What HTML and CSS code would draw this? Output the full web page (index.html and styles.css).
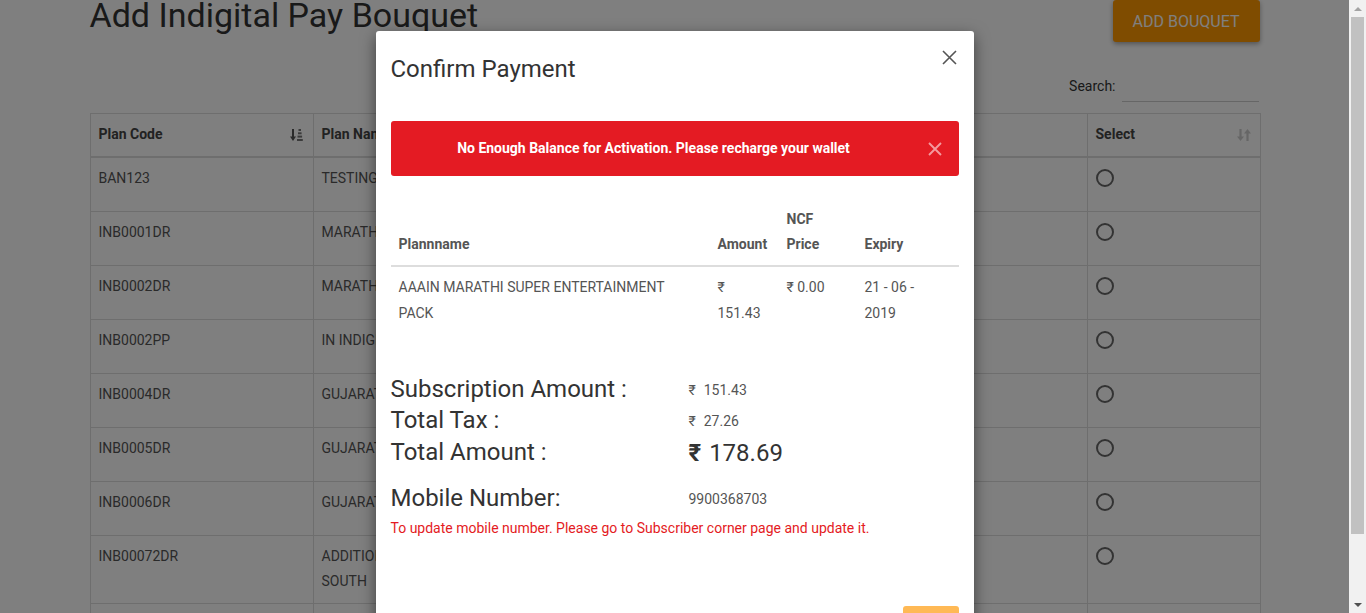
FILE: index.html
```html
<!DOCTYPE html>
<html lang="en">
<head>
<meta charset="utf-8">
<title>Add Indigital Pay Bouquet</title>
<link rel="stylesheet" href="styles.css">
</head>
<body>
<div class="viewport">
  <div class="main">
    <div class="container">
      <div class="page-head">
        <h2 class="page-title">Add Indigital Pay Bouquet</h2>
        <button class="btn-add" type="button">ADD BOUQUET</button>
      </div>
      <div class="search-row">
        <label class="search-label">Search:</label>
        <input class="search-input" type="text">
      </div>
      <table class="plans">
        <colgroup>
          <col class="c-code"><col class="c-name"><col class="c-price"><col class="c-exp"><col class="c-sel">
        </colgroup>
        <thead>
          <tr>
            <th><div class="th-in"><span>Plan Code</span>
              <svg class="sort-ic" width="14" height="14" viewBox="0 0 14 14"><path d="M3 1v8" stroke="#555" stroke-width="2"/><path d="M0 8.5h6L3 13z" fill="#555"/><rect x="8.5" y="1" width="2.5" height="2" fill="#777"/><rect x="8" y="4.3" width="3.6" height="2" fill="#777"/><rect x="7.5" y="7.6" width="4.6" height="2" fill="#777"/><rect x="7" y="11" width="5.8" height="2" fill="#777"/></svg>
            </div></th>
            <th><div class="th-in"><span>Plan Name</span></div></th>
            <th><div class="th-in"><span>Price</span></div></th>
            <th><div class="th-in"><span>Expiry</span></div></th>
            <th><div class="th-in"><span>Select</span>
              <svg class="sort-ic" width="14" height="14" viewBox="0 0 14 14"><path d="M3.5 1v8" stroke="#ccc" stroke-width="2.2"/><path d="M0 8.5h7L3.5 13z" fill="#ccc"/><path d="M10.5 13V5" stroke="#ccc" stroke-width="2.2"/><path d="M7 5.5h7L10.5 1z" fill="#ccc"/></svg>
            </div></th>
          </tr>
        </thead>
        <tbody>
          <tr><td>BAN123</td><td>TESTING</td><td>₹ 10.00</td><td>21-06-2019</td><td><span class="radio"></span></td></tr>
          <tr><td>INB0001DR</td><td>MARATHI BASIC</td><td>₹ 99.00</td><td>21-06-2019</td><td><span class="radio"></span></td></tr>
          <tr><td>INB0002DR</td><td>MARATHI PREMIUM</td><td>₹ 151.43</td><td>21-06-2019</td><td><span class="radio"></span></td></tr>
          <tr><td>INB0002PP</td><td>IN INDIGITAL PACK</td><td>₹ 120.00</td><td>21-06-2019</td><td><span class="radio"></span></td></tr>
          <tr><td>INB0004DR</td><td>GUJARATI BASIC</td><td>₹ 99.00</td><td>21-06-2019</td><td><span class="radio"></span></td></tr>
          <tr><td>INB0005DR</td><td>GUJARATI VALUE</td><td>₹ 130.00</td><td>21-06-2019</td><td><span class="radio"></span></td></tr>
          <tr><td>INB0006DR</td><td>GUJARATI PREMIUM</td><td>₹ 160.00</td><td>21-06-2019</td><td><span class="radio"></span></td></tr>
          <tr><td>INB00072DR</td><td>ADDITIONAL REGIONAL SOUTH</td><td>₹ 45.00</td><td>21-06-2019</td><td><span class="radio"></span></td></tr>
          <tr><td>INB0008DR</td><td>KANNADA BASIC</td><td>₹ 99.00</td><td>21-06-2019</td><td><span class="radio"></span></td></tr>
        </tbody>
      </table>
    </div>

    <div class="backdrop">
      <div class="modal">
        <div class="modal-head">
          <h4 class="modal-title">Confirm Payment</h4>
          <svg class="modal-close" width="15" height="15" viewBox="0 0 15 15"><path d="M1 1L14 14M14 1L1 14" stroke="#555" stroke-width="1.6"/></svg>
        </div>
        <div class="modal-body">
          <div class="alert">
            <span class="alert-text">No Enough Balance for Activation. Please recharge your wallet</span>
            <svg class="alert-close" width="14" height="14" viewBox="0 0 14 14"><path d="M1 1L13 13M13 1L1 13" stroke="#f49a9e" stroke-width="1.9"/></svg>
          </div>
          <table class="pay-table">
            <colgroup><col class="p-name"><col class="p-amt"><col class="p-ncf"><col class="p-exp"></colgroup>
            <thead>
              <tr><th>Plannname</th><th>Amount</th><th>NCF Price</th><th>Expiry</th></tr>
            </thead>
            <tbody>
              <tr><td class="name-cell">AAAIN MARATHI SUPER ENTERTAINMENT PACK</td><td>₹ 151.43</td><td>₹ 0.00</td><td class="exp-cell">21 - 06 - 2019</td></tr>
            </tbody>
          </table>
          <div class="summary">
            <div class="sum-row"><span class="sum-label">Subscription Amount :</span><span class="sum-val"><span class="rs">₹</span>151.43</span></div>
            <div class="sum-row"><span class="sum-label">Total Tax :</span><span class="sum-val"><span class="rs">₹</span>27.26</span></div>
            <div class="sum-row"><span class="sum-label">Total Amount :</span><span class="sum-total"><span class="rs rs-bold">₹</span>178.69</span></div>
            <div class="sum-row mobile-row"><span class="sum-label">Mobile Number:</span><span class="sum-val">9900368703</span></div>
          </div>
          <p class="note">To update mobile number. Please go to Subscriber corner page and update it.</p>
        </div>
        <div class="modal-foot">
          <button class="btn-pay" type="button">PAY</button>
        </div>
      </div>
    </div>
  </div>

  <div class="scrollbar">
    <div class="sb-btn"><span class="tri-up"></span></div>
    <div class="sb-thumb"></div>
    <div class="sb-track"></div>
    <div class="sb-btn"><span class="tri-down"></span></div>
  </div>
</div>
</body>
</html>
```

FILE: styles.css
```css
* { box-sizing: border-box; }

body {
  margin: 0;
  overflow: hidden;
  font-family: Roboto, "Noto Sans", "DejaVu Sans", sans-serif;
  background: #fff;
}

.viewport {
  display: flex;
  width: 1366px;
  height: 613px;
  overflow: hidden;
}

.main {
  position: relative;
  flex: 0 0 1349px;
  height: 613px;
  overflow: hidden;
  background: #fff;
}

.container {
  width: 1170px;
  margin: 0 auto;
}

.page-head {
  display: flex;
  justify-content: space-between;
  align-items: flex-start;
  height: 42px;
}

.page-title {
  margin: -3px 0 0;
  font-size: 34px;
  font-weight: 400;
  line-height: 1.1;
  color: #333;
  white-space: nowrap;
}

.btn-add {
  width: 147px;
  height: 42px;
  padding: 0;
  border: 0;
  border-radius: 3px;
  background: #ff9800;
  color: #fff;
  font-family: Roboto, sans-serif;
  font-size: 16px;
  font-weight: 400;
  box-shadow: 0 2px 5px rgba(0, 0, 0, 0.35);
}

.search-row {
  display: flex;
  justify-content: flex-end;
  align-items: center;
  gap: 6px;
  height: 30px;
  margin-top: 30px;
}

.search-label {
  margin-top: -2px;
  font-size: 14px;
  color: #333;
}

.search-input {
  width: 137px;
  height: 29px;
  margin-right: 1px;
  padding: 0;
  border: 0;
  border-bottom: 1px solid #ccc;
  background: transparent;
}

.plans {
  width: 1170px;
  margin-top: 11px;
  border-collapse: collapse;
  table-layout: fixed;
  font-size: 14px;
  line-height: 25.2px;
}

.c-code { width: 223px; }
.c-name { width: 207px; }
.c-price { width: 180px; }
.c-exp { width: 387px; }
.c-sel { width: 173px; }

.plans th,
.plans td {
  border: 1px solid #ddd;
  padding: 8px;
  text-align: left;
  vertical-align: top;
}

.plans th {
  padding-bottom: 9px;
  border-bottom: 2px solid #ddd;
  font-weight: 700;
  color: #444;
}

.plans td {
  color: #555;
}

.th-in {
  display: flex;
  justify-content: space-between;
  align-items: center;
}

.sort-ic {
  flex: 0 0 14px;
  margin-right: 1px;
}

.radio {
  display: block;
  width: 18px;
  height: 18px;
  margin: 3px 0 16px;
  border: 2px solid #666;
  border-radius: 50%;
}

/* modal */
.backdrop {
  position: absolute;
  inset: 0;
  display: flex;
  justify-content: center;
  align-items: flex-start;
  background: rgba(0, 0, 0, 0.5);
}

.modal {
  width: 598px;
  margin-top: 31px;
  background: #fff;
  border-radius: 3px;
  box-shadow: 0 5px 15px rgba(0, 0, 0, 0.5);
  color: #333;
}

.modal-head {
  display: flex;
  justify-content: space-between;
  align-items: flex-start;
  padding: 21px 15px 20px;
}

.modal-title {
  margin: 0;
  font-size: 24px;
  font-weight: 400;
  line-height: 34px;
  color: #333;
}

.modal-close {
  margin: -2px 2px 0 0;
}

.modal-body {
  padding: 15px 15px 15px;
}

.alert {
  display: flex;
  align-items: center;
  padding: 15px 17px 15px 15px;
  margin-bottom: 23px;
  border-radius: 3px;
  background: #e41b23;
  color: #fff;
  font-size: 14px;
  font-weight: 700;
  line-height: 25px;
}

.alert-text {
  flex: 1;
  text-align: center;
}

.alert-close {
  flex: 0 0 14px;
  margin-left: 26px;
}

.pay-table {
  width: 100%;
  border-collapse: collapse;
  table-layout: fixed;
  font-size: 14px;
  line-height: 25.2px;
}

.p-name { width: 319px; }
.p-amt { width: 69px; }
.p-ncf { width: 78px; }
.p-exp { width: 102px; }

.pay-table th {
  padding: 8px;
  text-align: left;
  vertical-align: bottom;
  border-bottom: 2px solid #ddd;
  font-weight: 700;
  color: #555;
}

.pay-table td {
  padding: 8px;
  vertical-align: top;
  color: #555;
}

.pay-table .name-cell {
  padding-right: 24px;
}

.pay-table .exp-cell {
  padding-right: 24px;
}

.summary {
  margin-top: 40px;
}

.sum-row {
  display: grid;
  grid-template-columns: 298px 1fr;
  align-items: center;
  height: 31.5px;
}

.sum-label {
  font-size: 24px;
  line-height: 31.5px;
  color: #333;
}

.sum-val {
  font-size: 14px;
  color: #555;
}

.sum-total {
  font-size: 24px;
  color: #333;
}

.rs {
  margin-right: 8px;
}

.rs-bold {
  font-weight: 700;
}

.mobile-row {
  margin-top: 14.5px;
}

.note {
  margin: 4px 0 0;
  font-size: 14px;
  line-height: 20px;
  color: #e41b23;
}

.modal-foot {
  display: flex;
  justify-content: flex-end;
  padding: 53px 15px 15px;
}

.btn-pay {
  width: 56px;
  height: 36px;
  border: 0;
  border-radius: 3px;
  background: #ffb955;
  color: #fff;
  font-family: Roboto, sans-serif;
  font-size: 14px;
}

/* scrollbar */
.scrollbar {
  display: flex;
  flex: 0 0 17px;
  flex-direction: column;
  background: #f1f1f1;
}

.sb-btn {
  display: flex;
  flex: 0 0 17px;
  align-items: center;
  justify-content: center;
}

.sb-thumb {
  flex: 0 0 517px;
  margin: 0 2px;
  background: #c1c1c1;
}

.sb-track {
  flex: 1;
}

.tri-up {
  width: 0;
  height: 0;
  border-left: 4px solid transparent;
  border-right: 4px solid transparent;
  border-bottom: 4px solid #a3a3a3;
}

.tri-down {
  width: 0;
  height: 0;
  border-left: 4px solid transparent;
  border-right: 4px solid transparent;
  border-top: 4px solid #505050;
}
```
